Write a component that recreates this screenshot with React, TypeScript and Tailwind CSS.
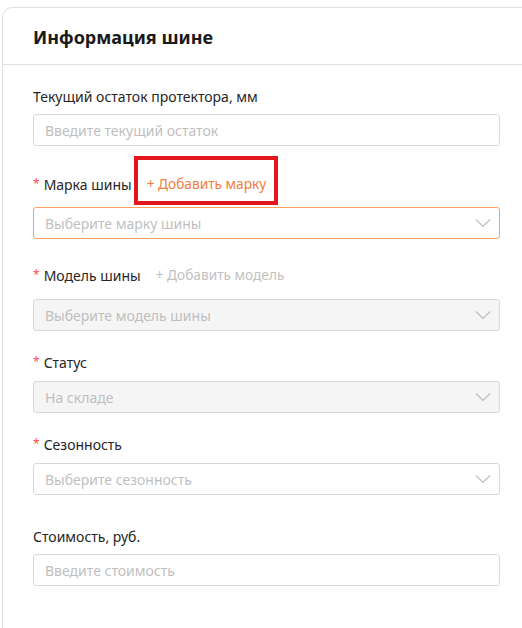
type Field = {
  label: string
  required?: boolean
  placeholder: string
  kind: 'input' | 'select'
  disabled?: boolean
  focused?: boolean
  action?: { text: string; active?: boolean; marked?: boolean }
  wrap: string
  gap: string
}

const fields: Field[] = [
  { label: 'Текущий остаток протектора, мм', placeholder: 'Введите текущий остаток', kind: 'input', wrap: 'mt-[20px]', gap: 'mt-[7px]' },
  {
    label: 'Марка шины',
    required: true,
    placeholder: 'Выберите марку шины',
    kind: 'select',
    focused: true,
    action: { text: '+ Добавить марку', active: true, marked: true },
    wrap: 'mt-[27px]',
    gap: 'mt-[12px]',
  },
  {
    label: 'Модель шины',
    required: true,
    placeholder: 'Выберите модель шины',
    kind: 'select',
    disabled: true,
    action: { text: '+ Добавить модель' },
    wrap: 'mt-[25px]',
    gap: 'mt-[13px]',
  },
  { label: 'Статус', required: true, placeholder: 'На складе', kind: 'select', disabled: true, wrap: 'mt-[20px]', gap: 'mt-[8px]' },
  { label: 'Сезонность', required: true, placeholder: 'Выберите сезонность', kind: 'select', wrap: 'mt-[20px]', gap: 'mt-[8px]' },
  { label: 'Стоимость, руб.', placeholder: 'Введите стоимость', kind: 'input', wrap: 'mt-[30px]', gap: 'mt-[7px]' },
]

function Chevron() {
  return (
    <svg width="16" height="10" viewBox="0 0 16 10" className="text-[#bdbdbd]">
      <polyline points="1,1.5 8,8.5 15,1.5" fill="none" stroke="currentColor" strokeWidth="1.2" />
    </svg>
  )
}

function FormField({ f }: { f: Field }) {
  const border = f.focused ? 'border-[#ff9f63]' : 'border-[#d9d9d9]'
  const bg = f.disabled ? 'bg-[#f5f5f5]' : 'bg-white'
  return (
    <div className={f.wrap}>
      <div className="flex items-center h-[22px] text-[14px] text-[#262626]">
        {f.required && <span className="text-[#ff4d4f] mr-[4px] text-[12px]">*</span>}
        <span>{f.label}</span>
        {f.action && (
          <span className="relative ml-[15px] text-[13.7px]">
            <span className={f.action.active ? 'text-[#f47c3c]' : 'text-[#c2c2c2]'}>{f.action.text}</span>
            {f.action.marked && (
              <span className="absolute left-[-13px] right-[-12px] top-[-18px] bottom-[-11px] border-[4px] border-[#e3161c]" />
            )}
          </span>
        )}
      </div>
      <div className={`${f.gap} h-[32px] flex items-center justify-between rounded-[3px] border ${border} ${bg} pl-[11px] pr-[8px]`}>
        <span className="text-[14px] text-[#bfbfbf]">{f.placeholder}</span>
        {f.kind === 'select' && <Chevron />}
      </div>
    </div>
  )
}

export default function App() {
  return (
    <div className="min-h-screen bg-white pt-[7px] pl-[2px] overflow-hidden" style={{ fontFamily: '"Noto Sans", "Open Sans", sans-serif' }}>
      <div className="h-[621px] border-l border-t border-[#e0e0e0] rounded-tl-[10px]">
        <div className="h-[57px] border-b border-[#e0e0e0] pl-[30px] flex items-center">
          <h1 className="text-[18px] font-bold text-[#1a1a1a] pt-[2px]">Информация шине</h1>
        </div>
        <div className="pl-[30px] pr-[22px]">
          {fields.map((f) => (
            <FormField key={f.label} f={f} />
          ))}
        </div>
      </div>
    </div>
  )
}
